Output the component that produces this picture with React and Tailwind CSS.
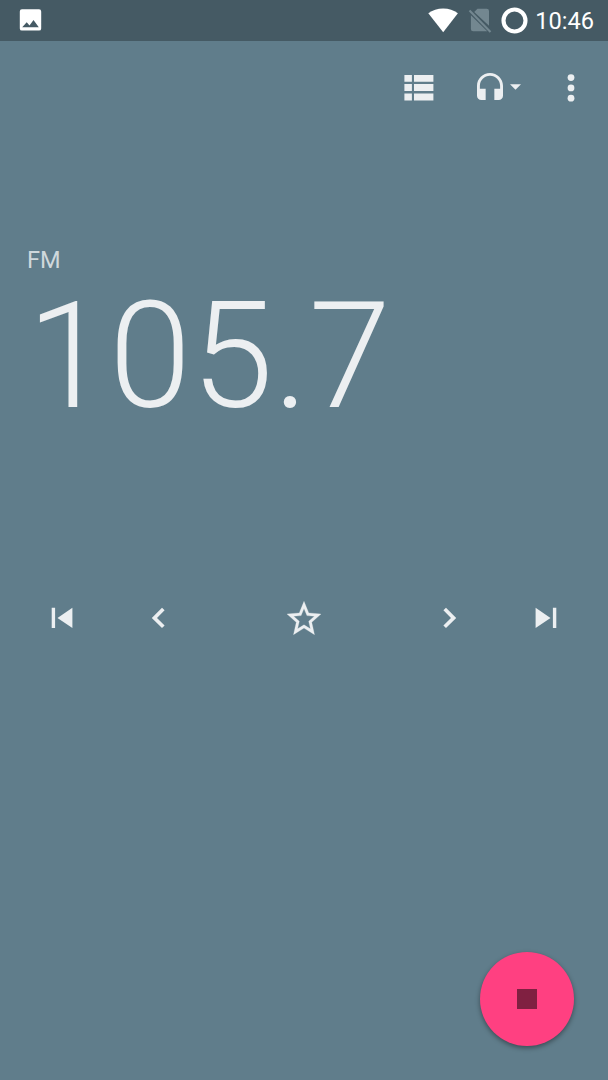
function StatusBar() {
    return (
        <div className="flex h-[40.5px] items-center bg-[#455a64] pl-[19px] pr-[14px] text-white">
            <svg width="23" height="24" viewBox="0 0 23 24">
                <path
                    fill="currentColor"
                    fillRule="evenodd"
                    d="M3 1.2h17q2.2 0 2.2 2.2v17q0 2.2-2.2 2.2H3q-2.2 0-2.2-2.2v-17Q.8 1.2 3 1.2ZM3.2 19.2h16.6L14.5 12l-4 5.6-2.8-3.4Z"
                />
            </svg>

            <div className="ml-auto flex items-center">
                <svg width="30" height="25" viewBox="0 0 30 25" className="mr-[10px]">
                    <path fill="currentColor" d="M.3 5.3C4.5 2.1 9.5.5 15.2.5s10.5 1.6 14.7 4.8L15.2 24.3Z" />
                </svg>
                <svg width="24" height="26" viewBox="0 0 24 26" className="mr-[9px] text-[#738790]">
                    <path fill="currentColor" d="M9.5 1.7h9.2q2.3 0 2.3 2.2v14.8L6.2 4.9ZM2.9 8.3l16.3 16H5.1q-2.2 0-2.2-2.2Z" />
                    <path stroke="currentColor" strokeWidth="2.1" d="M1.5 3.6 22.5 24.9" />
                </svg>
                <svg width="27" height="27" viewBox="0 0 27 27" className="mr-[7px]">
                    <circle cx="13.5" cy="13.5" r="11" fill="none" stroke="currentColor" strokeWidth="4.1" />
                </svg>
                <span className="pt-[2px] font-[Roboto,sans-serif] text-[23.6px] leading-[28px]">10:46</span>
            </div>
        </div>
    );
}

function Toolbar() {
    return (
        <div className="flex h-[94.5px] items-center justify-end pr-[33px] text-[#eceff1]">
            <button aria-label="Stations" className="mr-[43px]">
                <svg width="30" height="27" viewBox="0 0 30 27" fill="currentColor" className="block">
                    <path d="M.4.9h7.5v6.8H.4zM.4 10.1h7.5v7H.4zM.4 19.5h7.5v6.9H.4zM10 .9h19.4v6.8H10zM10 10.1h19.4v7H10zM10 19.5h19.4v6.9H10z" />
                </svg>
            </button>
            <button aria-label="Audio output" className="mr-[46px] flex items-center">
                <svg width="26" height="27" viewBox="3 1 18 19" preserveAspectRatio="none" fill="currentColor" className="-mt-[2px] mr-[7px]">
                    <path d="M12 1c-4.97 0-9 4.03-9 9v7c0 1.66 1.34 3 3 3h3v-8H5v-2c0-3.87 3.13-7 7-7s7 3.13 7 7v2h-4v8h3c1.66 0 3-1.34 3-3v-7c0-4.97-4.03-9-9-9z" />
                </svg>
                <svg width="11" height="6" viewBox="0 0 11 6" fill="currentColor" className="-mt-[2px]">
                    <path d="M0 .3h11L5.5 5.8Z" />
                </svg>
            </button>
            <button aria-label="More">
                <svg width="8" height="28" viewBox="0 0 8 28" fill="currentColor" className="block">
                    <circle cx="4" cy="3.6" r="3.4" />
                    <circle cx="4" cy="13.9" r="3.4" />
                    <circle cx="4" cy="24.2" r="3.4" />
                </svg>
            </button>
        </div>
    );
}

function Controls() {
    return (
        <div className="mt-[164px] flex items-center justify-between px-[51px] text-[#eceff1]">
            <button aria-label="Previous station">
                <svg width="22" height="22" viewBox="0 0 22 22" fill="currentColor">
                    <path d="M.7.7h3.4v20.4H.7zM21.4.7v20.4L6.5 10.9Z" />
                </svg>
            </button>
            <button aria-label="Tune down" className="mr-px ml-[26px]">
                <svg width="14" height="22" viewBox="0 0 14 22" fill="currentColor">
                    <path d="M13.6 3.3 11 .7.8 10.9 11 21.1l2.6-2.6L6 10.9Z" />
                </svg>
            </button>
            <button aria-label="Favorite" className="mx-[70px]">
                <svg width="34" height="34" viewBox="2 1.8 20 19.4" preserveAspectRatio="none" fill="currentColor" stroke="currentColor" strokeWidth="0.15">
                    <path d="M22 9.24l-7.19-.62L12 2 9.19 8.63 2 9.24l5.46 4.73L5.82 21 12 17.27 18.18 21l-1.63-7.03L22 9.24zM12 15.4l-3.76 2.27 1-4.28-3.32-2.88 4.38-.38L12 6.1l1.71 4.04 4.38.38-3.32 2.88 1 4.28L12 15.4z" />
                </svg>
            </button>
            <button aria-label="Tune up" className="mr-[27px]">
                <svg width="14" height="22" viewBox="0 0 14 22" fill="currentColor">
                    <path d="M.4 3.3 3 .7l10.2 10.2L3 21.1.4 18.5 8 10.9Z" />
                </svg>
            </button>
            <button aria-label="Next station">
                <svg width="22" height="22" viewBox="0 0 22 22" fill="currentColor">
                    <path d="M17.9.7h3.4v20.4h-3.4zM.6.7v20.4l14.9-10.2Z" />
                </svg>
            </button>
        </div>
    );
}

export default function App() {
    return (
        <div className="flex h-screen flex-col overflow-hidden bg-[#607d8b] font-[Roboto,sans-serif]">
            <StatusBar />
            <Toolbar />

            <div className="mt-[111px] pl-[27px]">
                <div className="text-[23.6px] leading-[28px] text-[#cfd8dc]">FM</div>
                <div className="mt-[3px] text-[148px] leading-[160px] font-light text-[#eceff1]">105.7</div>
            </div>

            <Controls />

            {/* Stop button */}
            <div className="mt-auto flex justify-end pr-[34px] pb-[34px]">
                <button
                    aria-label="Stop"
                    className="flex size-[94px] items-center justify-center rounded-full bg-[#ff4081] shadow-[0_2px_5px_rgba(0,0,0,0.4)]"
                >
                    <span className="size-[20.5px] bg-[#802041]" />
                </button>
            </div>
        </div>
    );
}
